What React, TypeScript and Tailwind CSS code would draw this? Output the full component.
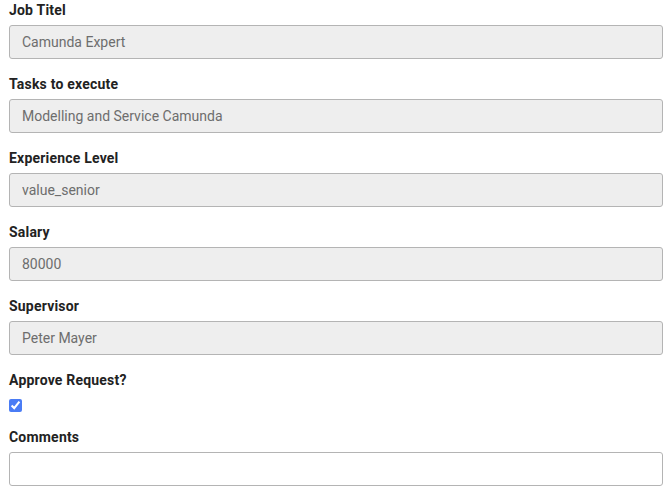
import { useState } from "react";

const fields = [
  { label: "Job Titel", value: "Camunda Expert" },
  { label: "Tasks to execute", value: "Modelling and Service Camunda" },
  { label: "Experience Level", value: "value_senior" },
  { label: "Salary", value: "80000" },
  { label: "Supervisor", value: "Peter Mayer" },
];

export default function App() {
  const [approved, setApproved] = useState(true);
  const [comments, setComments] = useState("");

  return (
    <div className="bg-white min-h-[491px] w-[669px] pl-[9px] pr-[6px] pt-0 font-['Roboto',sans-serif] text-[#222]">
      {fields.map((f) => (
        <div key={f.label} className="mb-[15px]">
          <label className="block h-[20px] text-[14px] leading-[20px] font-bold tracking-[0.2px] mb-[5px]">{f.label}</label>
          <input
            disabled
            value={f.value}
            readOnly
            className="block w-[654px] h-[34px] rounded-[3px] border border-[#b4b4b4] bg-[#eeeeee] px-[12px] text-[14px] text-[#6d6d6d] outline-none"
          />
        </div>
      ))}

      <div className="mb-[15px]">
        <label className="block h-[20px] text-[14px] leading-[20px] font-bold tracking-[0.2px] mb-[9px]">Approve Request?</label>
        <input
          type="checkbox"
          checked={approved}
          onChange={(e) => setApproved(e.target.checked)}
          className="block m-0 w-[13px] h-[13px] accent-[#4a7cf5]"
        />
      </div>

      <div>
        <label className="block h-[20px] text-[14px] leading-[20px] font-bold tracking-[0.2px] mb-[5px]">Comments</label>
        <input
          value={comments}
          onChange={(e) => setComments(e.target.value)}
          className="block w-[654px] h-[34px] rounded-[3px] border border-[#b4b4b4] bg-white px-[12px] text-[14px] outline-none"
        />
      </div>
    </div>
  );
}
